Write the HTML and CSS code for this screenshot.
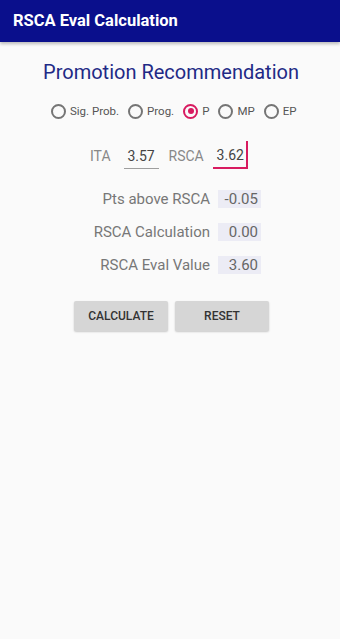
FILE: index.html
```html
<!doctype html>
<html lang="en">
<head>
    <meta charset="UTF-8">
    <meta name="viewport" content="width=device-width, initial-scale=1.0">
    <title>RSCA Eval Calculation</title>
    <link rel="stylesheet" href="styles.css">
</head>
<body>
    <div class="app-bar">RSCA Eval Calculation</div>

    <div class="content">
        <h1 class="page-title">Promotion Recommendation</h1>

        <div class="radio-row">
            <label class="radio"><span class="radio-dot"></span>Sig. Prob.</label>
            <label class="radio"><span class="radio-dot"></span>Prog.</label>
            <label class="radio checked"><span class="radio-dot"></span>P</label>
            <label class="radio"><span class="radio-dot"></span>MP</label>
            <label class="radio"><span class="radio-dot"></span>EP</label>
        </div>

        <div class="input-row">
            <span class="input-label">ITA</span>
            <span class="field">3.57</span>
            <span class="input-label">RSCA</span>
            <span class="field focused">3.62<span class="cursor"></span></span>
        </div>

        <div class="results">
            <span class="res-label">Pts above RSCA</span>
            <span class="res-value">-0.05</span>
            <span class="res-label">RSCA Calculation</span>
            <span class="res-value">0.00</span>
            <span class="res-label">RSCA Eval Value</span>
            <span class="res-value">3.60</span>
        </div>

        <div class="buttons">
            <div class="btn">Calculate</div>
            <div class="btn">Reset</div>
        </div>
    </div>
</body>
</html>
```

FILE: styles.css
```css
*{
    padding: 0;
    margin: 0;
    box-sizing: border-box;
}
body{
    background: #fafafa;
    font-family: Roboto, "Liberation Sans", sans-serif;
    width: 340px;
    height: 639px;
    overflow: hidden;
}
.app-bar{
    height: 42px;
    background: #0a0f8c;
    color: #fff;
    font-size: 16.5px;
    font-weight: bold;
    padding-left: 13px;
    line-height: 42px;
    box-shadow: 0 2px 3px rgba(0,0,0,.25);
}
.content{
    padding-top: 17px;
}
.page-title{
    text-align: center;
    font-size: 20px;
    font-weight: normal;
    color: #1f2a86;
    line-height: 26px;
    padding-left: 2px;
}
.radio-row{
    display: flex;
    align-items: center;
    margin-top: 16px;
    height: 20px;
    padding-left: 51px;
}
.radio{
    display: flex;
    align-items: center;
    font-size: 11.5px;
    color: #555;
    margin-right: 9px;
}
.radio-dot{
    width: 15px;
    height: 15px;
    border: 2px solid #757575;
    border-radius: 50%;
    margin-right: 4px;
    position: relative;
}
.radio.checked .radio-dot{
    border-color: #d81b60;
}
.radio.checked .radio-dot::after{
    content: "";
    position: absolute;
    left: 2.5px;
    top: 2.5px;
    width: 6px;
    height: 6px;
    border-radius: 50%;
    background: #d81b60;
}
.input-row{
    display: flex;
    align-items: flex-end;
    margin-top: 22px;
    padding-left: 90px;
    height: 26px;
}
.input-label{
    font-size: 14px;
    color: #888;
    padding-bottom: 5px;
}
.field{
    width: 35px;
    margin: 0 10px 0 13px;
    font-size: 14px;
    color: #444;
    text-align: center;
    padding-bottom: 4px;
    border-bottom: 1.5px solid #9e9e9e;
    position: relative;
}
.field.focused{
    border-bottom: 2px solid #d81b60;
    margin-left: 9px;
}
.cursor{
    position: absolute;
    right: 0;
    bottom: 0;
    width: 1.5px;
    height: 26px;
    background: #d81b60;
}
.results{
    display: grid;
    grid-template-columns: 210px 43px;
    column-gap: 8px;
    row-gap: 15px;
    margin-top: 21px;
    align-items: center;
}
.res-label{
    text-align: right;
    font-size: 15px;
    color: #777;
}
.res-value{
    background: #ececf5;
    color: #666;
    font-size: 15px;
    text-align: right;
    padding-right: 3px;
    height: 18px;
    line-height: 18px;
}
.buttons{
    display: flex;
    gap: 7px;
    padding-left: 74px;
    margin-top: 27px;
}
.btn{
    width: 94px;
    height: 30px;
    line-height: 30px;
    background: #d6d6d6;
    text-align: center;
    text-transform: uppercase;
    font-size: 12px;
    font-weight: 500;
    color: #333;
    box-shadow: 0 1px 2px rgba(0,0,0,.2);
    border-radius: 2px;
}
```
